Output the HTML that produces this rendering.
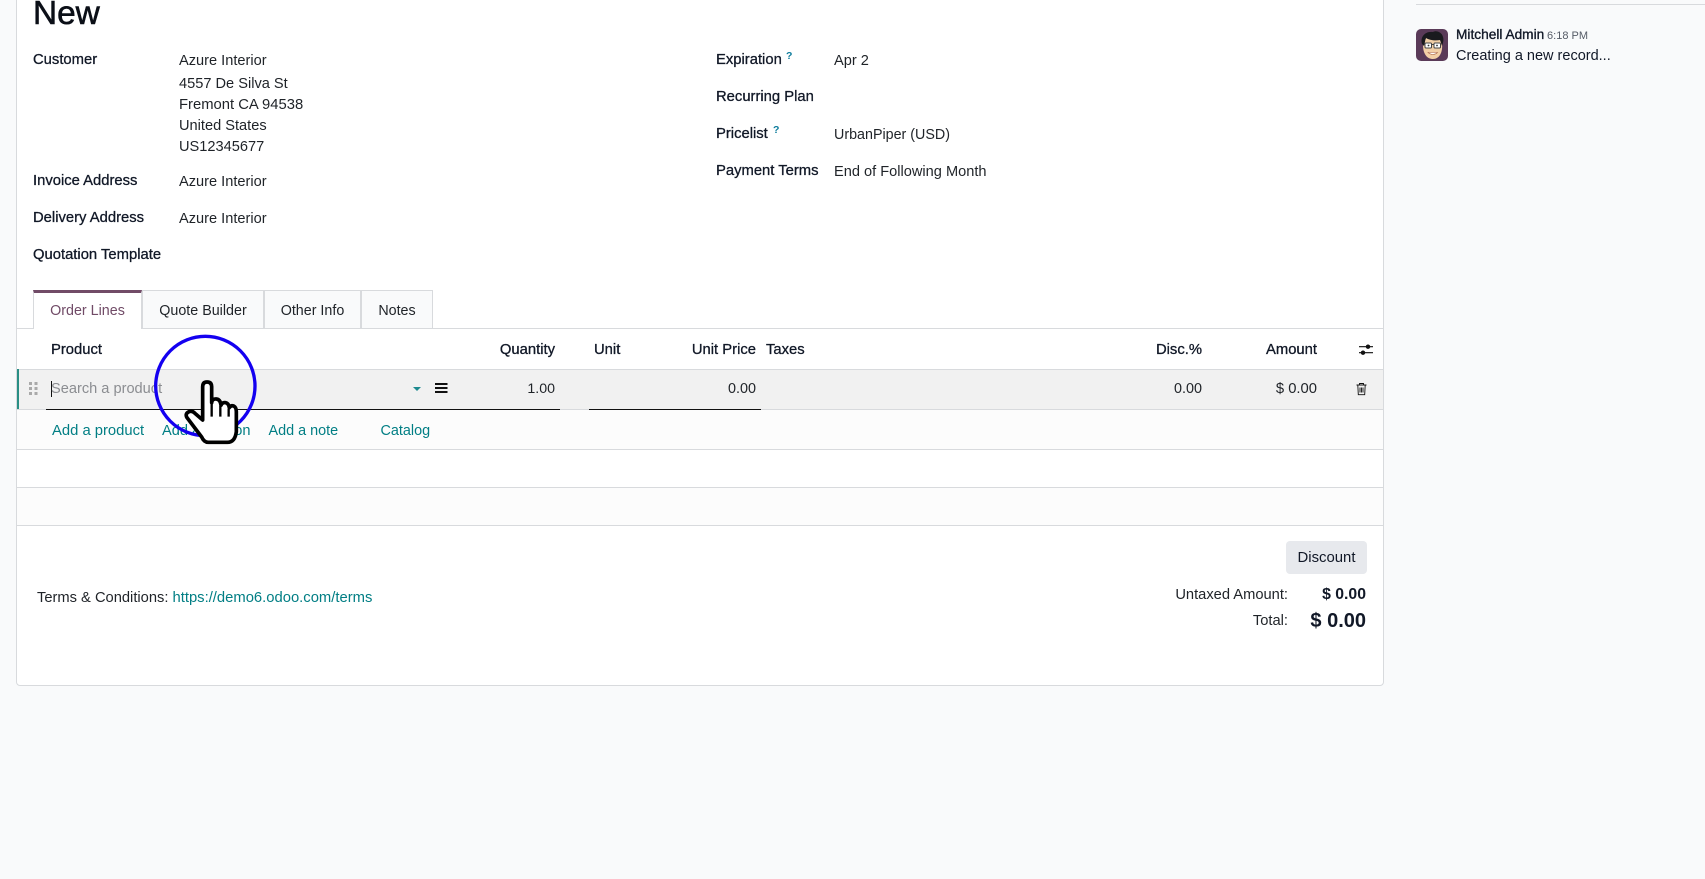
<!DOCTYPE html>
<html lang="en">
<head>
<meta charset="utf-8">
<title>New</title>
<style>
html,body{margin:0;padding:0;width:1705px;height:879px;overflow:hidden;background:#f9fafb}
body{position:relative;font-family:"Liberation Sans",Arial,sans-serif;font-size:14.6px;color:#1f2328}
.a{position:absolute}
.t{position:absolute;line-height:20px;height:20px;white-space:nowrap}
.l{font-size:14.8px;color:#111827;-webkit-text-stroke:.3px #111827}
.k{color:#017e84}
.r{text-align:right}
.tab{position:absolute;top:290px;height:38px;box-sizing:border-box;border:1px solid #d8dadd;border-bottom:0;background:#f9fafb;text-align:center;line-height:40px;margin-left:-1px;font-size:14.3px}
.hl{position:absolute;left:17px;width:1366px;height:1px;background:#d8dadd}
</style>
</head>
<body>
<div class="a" style="left:16px;top:-10px;width:1366px;height:694px;box-sizing:content-box;background:#fff;border:1px solid #d8dadd;border-radius:4px"></div>

<div class="t" style="left:33px;top:-6px;font-size:33.4px;line-height:40px;height:40px;color:#0b0f17;-webkit-text-stroke:.6px #0b0f17">New</div>

<div class="t l" style="left:33px;top:50px">Customer</div>
<div class="t" style="left:179px;top:51px">Azure Interior</div>
<div class="t" style="left:179px;top:74px">4557 De Silva St</div>
<div class="t" style="left:179px;top:95px;font-size:14.8px">Fremont CA 94538</div>
<div class="t" style="left:179px;top:116px">United States</div>
<div class="t" style="left:179px;top:137px">US12345677</div>
<div class="t l" style="left:33px;top:171px">Invoice Address</div>
<div class="t" style="left:179px;top:172px">Azure Interior</div>
<div class="t l" style="left:33px;top:208px">Delivery Address</div>
<div class="t" style="left:179px;top:209px">Azure Interior</div>
<div class="t l" style="left:33px;top:245px">Quotation Template</div>

<div class="t l" style="left:716px;top:50px">Expiration</div>
<div class="t" style="left:786px;top:46px;font-size:10.5px;color:#0d7c9c;font-weight:700">?</div>
<div class="t" style="left:834px;top:51px">Apr 2</div>
<div class="t l" style="left:716px;top:87px">Recurring Plan</div>
<div class="t l" style="left:716px;top:124px">Pricelist</div>
<div class="t" style="left:773px;top:120px;font-size:10.5px;color:#0d7c9c;font-weight:700">?</div>
<div class="t" style="left:834px;top:125px;font-size:14.3px">UrbanPiper (USD)</div>
<div class="t l" style="left:716px;top:161px">Payment Terms</div>
<div class="t" style="left:834px;top:162px">End of Following Month</div>

<!-- tabs -->
<div class="hl" style="top:328px"></div>
<div class="tab" style="left:34px;width:109px;background:#fff;height:39px;border-top:3px solid #714b67;color:#714b67;line-height:37px;z-index:2">Order Lines</div>
<div class="tab" style="left:143px;width:122px">Quote Builder</div>
<div class="tab" style="left:265px;width:97px">Other Info</div>
<div class="tab" style="left:362px;width:72px">Notes</div>

<!-- table -->
<div class="t l" style="left:51px;top:340px">Product</div>
<div class="t l r" style="right:1150px;top:340px">Quantity</div>
<div class="t l" style="left:594px;top:340px">Unit</div>
<div class="t l r" style="right:949px;top:340px">Unit Price</div>
<div class="t l" style="left:766px;top:340px">Taxes</div>
<div class="t l r" style="right:503px;top:340px">Disc.%</div>
<div class="t l r" style="right:388px;top:340px">Amount</div>
<svg class="a" style="left:1358px;top:343px" width="16" height="14" viewBox="0 0 16 14"><path d="M1 3.7H15M1 9.7H15" stroke="#111" stroke-width="1.2"/><circle cx="10" cy="3.7" r="2.2" fill="#111"/><circle cx="5" cy="9.7" r="2.2" fill="#111"/></svg>

<div class="hl" style="top:369px"></div>
<div class="a" style="left:17px;top:370px;width:1366px;height:39px;background:#f1f1f1"></div>
<div class="a" style="left:17px;top:369px;width:2px;height:40px;background:#2a8f85"></div>
<svg class="a" style="left:29px;top:382px" width="9" height="13" viewBox="0 0 9 13" fill="#a9a9a9"><rect x="0" y="0" width="3" height="3"/><rect x="5.5" y="0" width="3" height="3"/><rect x="0" y="5" width="3" height="3"/><rect x="5.5" y="5" width="3" height="3"/><rect x="0" y="10" width="3" height="3"/><rect x="5.5" y="10" width="3" height="3"/></svg>
<div class="a" style="left:51px;top:381px;width:1px;height:16px;background:#111"></div>
<div class="t" style="left:51px;top:378.5px;color:#8b8d91;font-size:14.6px">Search a product</div>
<svg class="a" style="left:412px;top:386px" width="10" height="6" viewBox="0 0 10 6"><path d="M1 1H9L5 5Z" fill="#1d8a8f"/></svg>
<svg class="a" style="left:435px;top:382px" width="13" height="12" viewBox="0 0 13 12" fill="#111"><rect x="0" y="1" width="12.5" height="2"/><rect x="0" y="5" width="12.5" height="2"/><rect x="0" y="9" width="12.5" height="2"/></svg>
<div class="t r" style="right:1150px;top:378.5px;font-size:14.2px">1.00</div>
<div class="t r" style="right:949px;top:378.5px;font-size:14.4px">0.00</div>
<div class="t r" style="right:503px;top:378.5px;font-size:14.4px">0.00</div>
<div class="t r" style="right:388px;top:378.5px;font-size:14.8px">$ 0.00</div>
<svg class="a" style="left:1355px;top:382px" width="13" height="14" viewBox="0 0 13 14" fill="none" stroke="#111" stroke-width=".9"><path d="M1.5 3H11.5M4.5 3V1.5H8.5V3M2.8 3L3.3 12.7H9.7L10.2 3M5 5.5V10.5M6.5 5.5V10.5M8 5.5V10.5"/></svg>
<div class="a" style="left:46px;top:409px;width:514px;height:1px;background:#111;z-index:1"></div>
<div class="a" style="left:589px;top:409px;width:172px;height:1px;background:#111;z-index:1"></div>

<div class="hl" style="top:409px"></div>
<div class="a" style="left:17px;top:410px;width:1366px;height:39px;background:#fcfcfc"></div>
<div class="t k" style="left:52px;top:421px;font-size:14.8px">Add a product</div>
<div class="t k" style="left:162px;top:421px;font-size:14.6px">Add a section</div>
<div class="t k" style="left:268.5px;top:421px;font-size:14.4px">Add a note</div>
<div class="t k" style="left:380.5px;top:421px;font-size:14.4px">Catalog</div>
<div class="hl" style="top:449px"></div>
<div class="hl" style="top:487px"></div>
<div class="a" style="left:17px;top:488px;width:1366px;height:37px;background:#fcfcfc"></div>
<div class="hl" style="top:525px"></div>

<!-- footer -->
<div class="t" style="left:37px;top:587.5px;font-size:14.7px">Terms &amp; Conditions: <span class="k" style="font-size:14.8px">https://demo6.odoo.com/terms</span></div>
<div class="a" style="left:1286px;top:541px;width:81px;height:33px;background:#e7e9ed;border-radius:4px;text-align:center;line-height:35px;color:#111827;font-size:14.9px">Discount</div>
<div class="t r" style="right:417px;top:584.5px;font-size:14.7px">Untaxed Amount:</div>
<div class="t r" style="right:339px;top:584.5px;font-weight:700;font-size:15.8px;color:#111827">$ 0.00</div>
<div class="t r" style="right:417px;top:610.5px;font-size:14.7px">Total:</div>
<div class="t r" style="right:339px;top:610.5px;font-weight:700;font-size:20px;color:#111827">$ 0.00</div>

<!-- chatter -->
<div class="a" style="left:1416px;top:4px;width:289px;height:1px;background:#d8dadd"></div>
<svg class="a" style="left:1416px;top:29px" width="32" height="32" viewBox="0 0 32 32">
<rect width="32" height="32" rx="5" fill="#5a3a58"/>
<path d="M7 16C7 25 11 30 17 30C23 30 27 24 26 14L24 9H10Z" fill="#f2cfa6"/>
<path d="M6 15C4 8 9 2 17 3C20 1 26 3 27 8C28 11 27 14 26 17L24 11C19 12 13 11 10 9C9 11 9 14 8 17Z" fill="#1a1a1e"/>
<rect x="9" y="14" width="6.5" height="5" rx="1" fill="#fff" stroke="#444" stroke-width="1"/>
<rect x="18" y="14" width="6.5" height="5" rx="1" fill="#fff" stroke="#444" stroke-width="1"/>
<path d="M15.5 15.5H18" stroke="#444" stroke-width="1"/>
<circle cx="12.5" cy="16.5" r=".9" fill="#333"/><circle cx="21" cy="16.5" r=".9" fill="#333"/>
<path d="M12 23.5C15 26 19 26 21.5 23.5Z" fill="#fff" stroke="#a9644a" stroke-width=".6"/>
</svg>
<div class="t" style="left:1456px;top:25px;font-size:13.7px;color:#111827;-webkit-text-stroke:.35px #111827">Mitchell Admin <span style="font-size:11px;color:#555b66;-webkit-text-stroke:0;margin-left:-1px">6:18 PM</span></div>
<div class="t" style="left:1456px;top:46px;color:#111827;font-size:14.5px">Creating a new record...</div>

<!-- pointer -->
<svg class="a" style="left:140px;top:320px;z-index:5" width="140" height="140" viewBox="0 0 420 420">
<circle cx="196" cy="198" r="149" fill="none" stroke="#1400f0" stroke-width="10"/>
<path d="M188 200Q188 186 201 186Q215 186 215 200L215 248Q216 236 229 237Q241 238 243 256Q247 246 257 248Q266 250 268 263Q273 255 281 258Q289 262 289 275L289 335Q285 367 262 367L205 367Q192 367 185 351L141 293Q134 281 147 275Q156 271 165 280L188 300Z" fill="#fff" stroke="#000" stroke-width="11" stroke-linejoin="round"/>
<path d="M215 250V290M241 258V290M266 266V290" fill="none" stroke="#000" stroke-width="7"/>
</svg>
</body>
</html>
